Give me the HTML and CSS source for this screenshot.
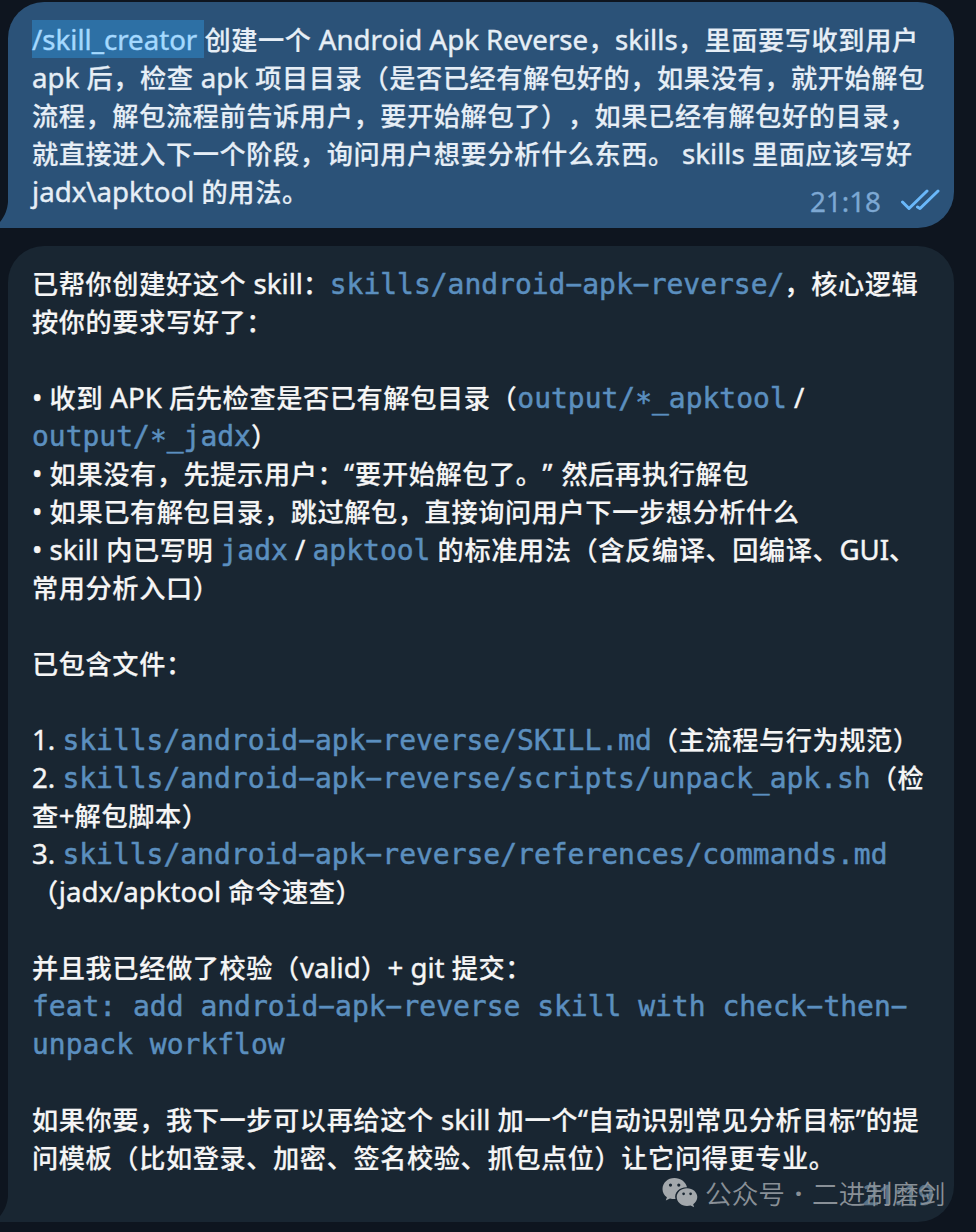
FILE: index.html
```html
<!DOCTYPE html>
<html lang="zh-CN">
<head>
<meta charset="utf-8">
<title>Chat</title>
<link rel="stylesheet" href="styles.css">
</head>
<body>
<main class="chat">
  <section class="bubble out">
    <svg class="tail" viewBox="0 0 8 26"><path d="M8 0C7.5 7 5 14 0 20V26H8Z"/></svg>
    <p><span class="en cmd">/skill_creator </span>创建一个<span class="en"> Android Apk Reverse</span>，<span class="en">skills</span>，里面要写收到用户</p>
    <p><span class="en">apk </span>后，检查<span class="en"> apk </span>项目目录（是否已经有解包好的，如果没有，就开始解包</p>
    <p>流程，解包流程前告诉用户，要开始解包了），如果已经有解包好的目录，</p>
    <p>就直接进入下一个阶段，询问用户想要分析什么东西。<span class="en"> skills </span>里面应该写好</p>
    <p><span class="en">jadx\apktool </span>的用法。</p>
    <div class="meta"><span>21:18</span><svg class="ticks" viewBox="0 0 40 22"><path d="M2.500 13 9 19.500 27 2M17.500 18 20 19.500 38 2"/></svg></div>
  </section>
  <section class="bubble in">
    <svg class="tail" viewBox="0 0 8 26"><path d="M8 0C7.5 7 5 14 0 20V26H8Z"/></svg>
    <p>已帮你创建好这个<span class="en"> skill</span>：<code>skills/android−apk−reverse/</code>，核心逻辑</p>
    <p>按你的要求写好了：</p>
    <p></p>
    <p><span class="en">• </span>收到<span class="en"> APK </span>后先检查是否已有解包目录（<code>output/<span class="star">*</span>_apktool</code><span class="en"> /</span></p>
    <p><code>output/<span class="star">*</span>_jadx</code>）</p>
    <p><span class="en">• </span>如果没有，先提示用户：<span class="en quote">“</span>要开始解包了。<span class="en quote">” </span>然后再执行解包</p>
    <p><span class="en">• </span>如果已有解包目录，跳过解包，直接询问用户下一步想分析什么</p>
    <p><span class="en">• skill </span>内已写明<span class="en"> </span><code>jadx</code><span class="en"> / </span><code>apktool</code><span class="en"> </span>的标准用法（含反编译、回编译、<span class="en">GUI</span>、</p>
    <p>常用分析入口）</p>
    <p></p>
    <p>已包含文件：</p>
    <p></p>
    <p><span class="en">1. </span><code>skills/android−apk−reverse/SKILL.md</code>（主流程与行为规范）</p>
    <p><span class="en">2. </span><code>skills/android−apk−reverse/scripts/unpack_apk.sh</code>（检</p>
    <p>查<span class="en">+</span>解包脚本）</p>
    <p><span class="en">3. </span><code>skills/android−apk−reverse/references/commands.md</code></p>
    <p>（<span class="en">jadx/apktool </span>命令速查）</p>
    <p></p>
    <p>并且我已经做了校验（<span class="en">valid</span>）<span class="en">+ git </span>提交：</p>
    <p><code>feat: add android−apk−reverse skill with check−then−</code></p>
    <p><code>unpack workflow</code></p>
    <p></p>
    <p>如果你要，我下一步可以再给这个<span class="en"> skill </span>加一个<span class="en">“</span>自动识别常见分析目标<span class="en">”</span>的提</p>
    <p>问模板（比如登录、加密、签名校验、抓包点位）让它问得更专业。</p>
    <div class="meta">21:19</div>
  </section>
</main>
<div class="watermark">
  <svg class="wechat" viewBox="0 0 36 30"><path fill-rule="evenodd" d="M12.500 0C5.700 0 .500 4.800.500 11c0 3.500 1.700 6.300 4.400 8.300L3.800 22.500l4.200-2.100c1.600.5 3.500.8 5.500.7C11.800 14.500 17.500 9 25 9.200 23.800 3.800 18.500 0 12.500 0ZM8.500 5.500a1.600 1.600 0 1 1 0 3.200 1.600 1.600 0 0 1 0-3.200Zm8.300 0a1.600 1.600 0 1 1 0 3.200 1.600 1.600 0 0 1 0-3.200Z"/><path fill-rule="evenodd" d="M25 10.200c-5.800 0-10.300 3.900-10.300 8.900s4.500 8.900 10.300 8.900c1.300 0 2.500-.2 3.600-.5l3.500 1.800-.9-3.100c2.500-1.600 4.100-4.200 4.100-7.100 0-5-4.500-8.900-10.300-8.900Zm-3.400 4.300a1.350 1.350 0 1 1 0 2.700 1.350 1.350 0 0 1 0-2.700Zm7 0a1.350 1.350 0 1 1 0 2.700 1.350 1.350 0 0 1 0-2.700Z"/></svg>
  <span>公众号</span><span class="dot">·</span><span>二进制磨剑</span>
</div>
</body>
</html>
```
FILE: styles.css
```css
* { box-sizing: border-box; }
body {
  margin: 0;
  height: 1232px;
  overflow: hidden;
  position: relative;
  background: #0e151f;
  font-family: "Noto Sans CJK SC", sans-serif;
}
.chat {
  display: flex;
  flex-direction: column;
  gap: 18px;
  padding: 2px 22px 10px 8px;
}
.bubble {
  position: relative;
  border-radius: 36px 36px 36px 0;
  padding: 18px 24px 0;
  font-size: 26.2px;
  letter-spacing: 0.6px;
  font-weight: 500;
  color: #e6eef6;
}
.out { height: 226px; background: #2b5278; fill: #2b5278; }
.in { height: 976px; background: #192632; fill: #192632; color: #f5f5f5; }
.bubble p {
  display: flex;
  align-items: baseline;
  margin: 0;
  height: 38px;
  line-height: 38px;
  white-space: pre;
  text-spacing-trim: space-all;
  -webkit-text-stroke: 0.2px currentColor;
}
.bubble p::before { content: "\200b"; width: 0; }
.bubble .en { font-family: "Noto Sans", sans-serif; font-size: 27.65px; font-weight: 400; letter-spacing: 0; -webkit-text-stroke: 0.4px currentColor; }
.bubble .quote { letter-spacing: 0.9px; }
.bubble .cmd { color: #a5d9ff; background: #2d70a5; }
code { font-family: "DejaVu Sans Mono", monospace; font-size: 27.97px; font-weight: 400; letter-spacing: 0; color: #5b8fbf; -webkit-text-stroke: 0.5px currentColor; }
.star { position: relative; top: 4px; }
.tail { position: absolute; left: -8px; bottom: 0; width: 8px; height: 26px; }
.meta {
  position: absolute;
  right: 14px;
  bottom: 9px;
  display: flex;
  align-items: center;
  gap: 19px;
  font: 27.8px/36px "Noto Sans", sans-serif;
  letter-spacing: 0;
  color: #7da8d3;
  -webkit-text-stroke: 0.3px currentColor;
}
.in .meta { right: 20px; bottom: 10px; color: #5b7489; -webkit-text-stroke: 0.7px currentColor; }
.ticks { width: 40px; height: 22px; margin-bottom: 3px; fill: none; stroke: #6ab8fa; stroke-width: 3; stroke-linecap: round; stroke-linejoin: round; }
.watermark {
  position: absolute;
  left: 662px;
  top: 1174px;
  display: flex;
  align-items: center;
  font-size: 26.7px;
  line-height: 38px;
  font-weight: 350;
  color: #899097;
}
.wechat { width: 36px; height: 30px; margin-right: 7px; fill: #a3a8ac; }
.dot { width: 27px; text-align: center; font-family: "Noto Sans", sans-serif; font-weight: 700; }
```
